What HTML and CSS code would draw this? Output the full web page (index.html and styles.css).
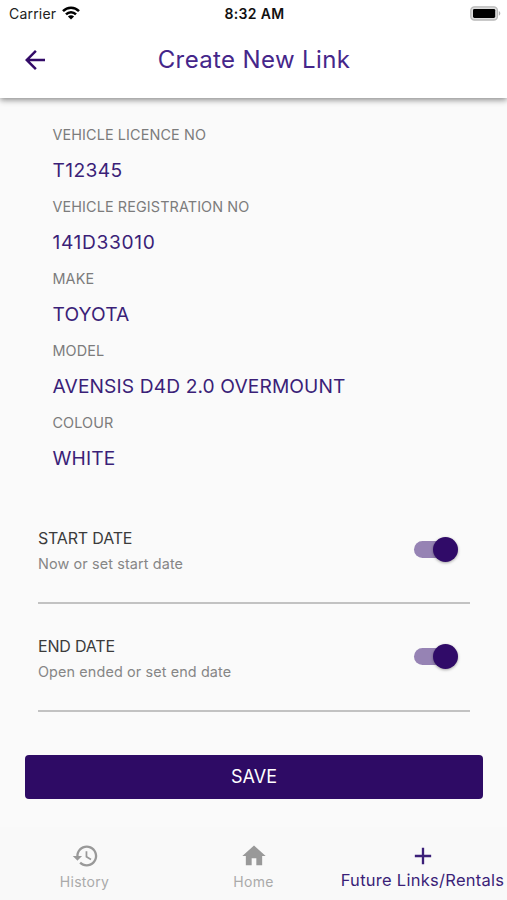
FILE: index.html
```html
<!DOCTYPE html>
<html lang="en">
<head>
<meta charset="utf-8">
<title>Create New Link</title>
<link rel="stylesheet" href="styles.css">
</head>
<body>
<div class="app">
  <header class="header">
    <div class="status">
      <div class="carrier"><span class="carrier-name">Carrier</span>
        <svg class="wifi" viewBox="0 0 18 14"><g fill="none" stroke="#000" stroke-width="2.5"><path d="M1 5.2C5.4.6 12.6.6 17 5.2"/><path d="M4 8.4c2.8-2.9 7.2-2.9 10 0"/></g><path d="M9 13.6 5.9 10.6c1.7-1.7 4.5-1.7 6.2 0z"/></svg>
      </div>
      <span class="time">8:32 AM</span>
      <svg class="battery" viewBox="0 0 31 15"><rect x=".8" y=".8" width="26.6" height="13.2" rx="3.6" fill="#ddd" stroke="#b8b8b8" stroke-width="1.3"/><rect x="3" y="2.9" width="22.2" height="9" rx="1.4"/><path d="M28.8 5v4.8c2-.9 2-3.9 0-4.8z" fill="#b0b0b0"/></svg>
    </div>
    <div class="toolbar">
      <svg class="back" viewBox="4 4 16 16"><path d="M20 11H7.83l5.59-5.59L12 4l-8 8 8 8 1.41-1.41L7.83 13H20v-2z"/></svg>
      <h1 class="title">Create New Link</h1>
    </div>
  </header>
  <main class="main">
    <dl class="details">
      <dt>VEHICLE LICENCE NO</dt><dd class="licence">T12345</dd>
      <dt>VEHICLE REGISTRATION NO</dt><dd class="registration">141D33010</dd>
      <dt>MAKE</dt><dd>TOYOTA</dd>
      <dt>MODEL</dt><dd>AVENSIS D4D 2.0 OVERMOUNT</dd>
      <dt>COLOUR</dt><dd>WHITE</dd>
    </dl>
    <section class="option">
      <div class="option-text"><span class="option-name">START DATE</span><span class="option-hint">Now or set start date</span></div>
      <div class="switch"><div class="knob"></div></div>
    </section>
    <section class="option">
      <div class="option-text"><span class="option-name">END DATE</span><span class="option-hint">Open ended or set end date</span></div>
      <div class="switch"><div class="knob"></div></div>
    </section>
    <button class="save">SAVE</button>
  </main>
  <nav class="tabs">
    <div class="tab">
      <svg class="tab-icon" viewBox="-.5 0 24 24"><path d="M13 3c-4.97 0-9 4.03-9 9H1l3.89 3.89.07.14L9 12H6c0-3.87 3.13-7 7-7s7 3.13 7 7-3.13 7-7 7c-1.93 0-3.68-.79-4.94-2.06l-1.42 1.42C8.27 19.99 10.51 21 13 21c4.97 0 9-4.03 9-9s-4.03-9-9-9zm-1 5v5l4.28 2.54.72-1.21-3.5-2.08V8H12z"/></svg>
      <span class="tab-label">History</span>
    </div>
    <div class="tab">
      <svg class="tab-icon" viewBox="0 0 24 24"><path d="M10 20v-6h4v6h5v-8h3L12 3 2 12h3v8z"/></svg>
      <span class="tab-label">Home</span>
    </div>
    <div class="tab active">
      <svg class="tab-icon" viewBox="0 0 24 24"><path d="M19 13h-6v6h-2v-6H5v-2h6V5h2v6h6v2z"/></svg>
      <span class="tab-label">Future Links/Rentals</span>
    </div>
  </nav>
</div>
</body>
</html>
```
FILE: styles.css
```css
* { box-sizing: border-box; }
body { margin: 0; background: #fafafa; font-family: Inter, sans-serif; }
.app { width: 507px; height: 900px; display: flex; flex-direction: column; overflow: hidden; }
.header { height: 98px; flex: none; background: #fff; box-shadow: 0 2px 6px rgba(0,0,0,.45); }
.status { height: 27px; padding: 0 7px 0 9px; display: grid; grid-template-columns: 1fr auto 1fr; align-items: center; }
.carrier { display: flex; align-items: center; gap: 6px; font-size: 14px; line-height: 27px; color: #222; }
.carrier-name { letter-spacing: .2px; }
.wifi { width: 18px; height: 14px; margin-top: -2px; }
.time { font-size: 14px; font-weight: 600; letter-spacing: .35px; line-height: 27px; color: #111; }
.battery { width: 31px; height: 15px; justify-self: end; margin-right: -1px; }
.toolbar { height: 65px; display: grid; grid-template-columns: 60px 1fr 60px; align-items: center; }
.back { width: 20px; height: 20px; margin-left: 25px; fill: #330b68; }
.title { margin: 0; padding-left: 1px; text-align: center; font-size: 24px; font-weight: 400; letter-spacing: .37px; line-height: 30px; color: #45268a; }
.main { flex: 1; padding: 0 24px 0 25px; }
.details { margin: 0; padding: 19px 0 19.5px 27.5px; }
.details dt { height: 35px; line-height: 36px; font-size: 14.4px; letter-spacing: .11px; color: #7c7c7c; }
.details dd { height: 37px; margin: 0; line-height: 36px; font-size: 19.2px; letter-spacing: .11px; color: #3b1f78; }
.details .licence { letter-spacing: .38px; }
.details .registration { letter-spacing: .65px; }
.option { height: 107.5px; margin: 0 13px 0 13px; padding-right: 12px; border-bottom: 2px solid #c2c2c2; display: flex; justify-content: space-between; align-items: center; }
.option-text { display: flex; flex-direction: column; padding-top: 4px; }
.option-name { font-size: 16px; line-height: 25px; letter-spacing: -.18px; color: #3b3b3b; }
.option-hint { font-size: 14.4px; line-height: 25px; letter-spacing: .12px; color: #868686; }
.switch { width: 44px; height: 17px; border-radius: 9px; background: linear-gradient(90deg, #9683b4 36px, transparent 36px); display: flex; align-items: center; justify-content: flex-end; }
.knob { width: 25px; height: 25px; flex: none; border-radius: 50%; background: #300b68; box-shadow: 0 1px 3px rgba(0,0,0,.35); }
.save { display: block; width: 100%; height: 44px; margin-top: 43.5px; padding: 0; border: 0; border-radius: 4px; background: #2e0b65; color: #fff; font: 400 18px/44px Inter, sans-serif; }
.tabs { height: 73px; flex: none; display: grid; grid-template-columns: repeat(3, 169px); background: #f9f9f9; }
.tab { display: flex; flex-direction: column; align-items: center; padding-top: 15px; color: #999; white-space: nowrap; }
.tab-icon { width: 28px; height: 28px; fill: currentColor; }
.tab-label { font-size: 14px; line-height: 24px; letter-spacing: .3px; color: #aaa; }
.active, .active .tab-label { color: #3b1f78; }
.active .tab-label { font-size: 16.5px; line-height: 21px; letter-spacing: .27px; }
```
